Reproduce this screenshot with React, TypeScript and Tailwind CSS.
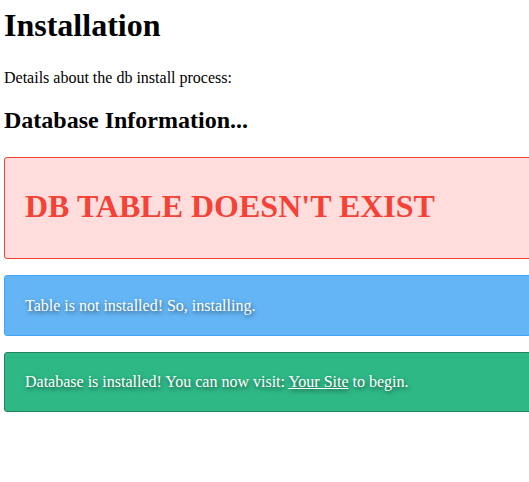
export default function App() {
  return (
    <div className="min-h-[482px] overflow-hidden bg-white px-1 pt-2 text-black" style={{ fontFamily: '"Liberation Serif", "Times New Roman", serif' }}>
      <h1 className="text-[32px] font-bold leading-[35px]">Installation</h1>
      <p className="mt-[26px] text-base leading-[18px]">Details about the db install process:</p>
      <h2 className="mt-[20px] text-2xl font-bold leading-[27px]">Database Information...</h2>

      <div className="mt-[23px] w-[600px] rounded-[3px] border border-[#f44336] bg-[#ffdddd] px-5 pb-[34px] pt-[31px]">
        <h1 className="text-[32px] font-bold leading-[35px] text-[#f44336]">DB TABLE DOESN'T EXIST</h1>
      </div>

      <div className="mt-4 w-[600px] rounded-[3px] border border-[#42a5f5] bg-[#64b5f6] px-5 py-5 text-base leading-[19px] text-white [text-shadow:1px_2px_4px_rgba(0,0,0,0.55)]">
        Table is not installed! So, installing.
      </div>

      <div className="mt-4 w-[600px] rounded-[3px] border border-[#24845f] bg-[#2eb886] px-5 py-5 text-base leading-[18px] text-white [text-shadow:1px_2px_4px_rgba(0,0,0,0.55)]">
        Database is installed! You can now visit: <a href="#" className="underline">Your Site</a> to begin.
      </div>
    </div>
  );
}
